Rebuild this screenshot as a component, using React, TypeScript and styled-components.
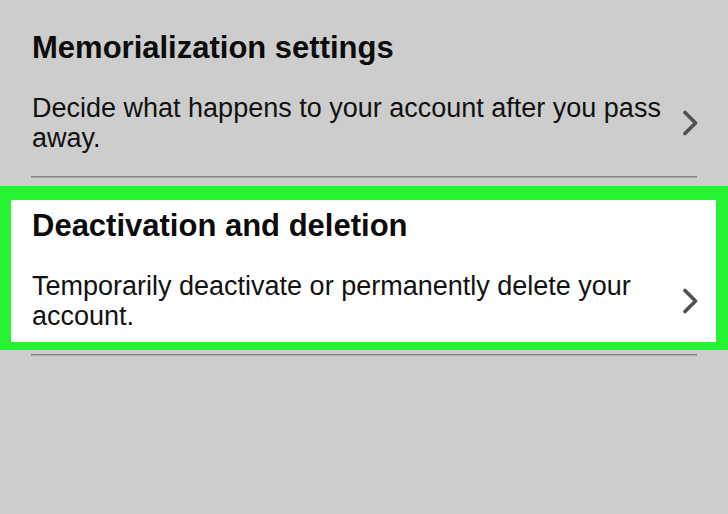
import React from "react";
import styled, { createGlobalStyle, css } from "styled-components";

const GlobalStyle = createGlobalStyle`
  html, body {
    margin: 0;
    padding: 0;
    background: #cdcdcd;
  }
  body {
    font-family: "Liberation Sans", Arial, sans-serif;
    color: #111;
  }
`;

const Page = styled.div`
  width: 728px;
  height: 514px;
  padding-top: 8px;
  box-sizing: border-box;
  background: #cdcdcd;
  overflow: hidden;
`;

interface ItemProps {
  readonly highlighted?: boolean;
}

const Item = styled.div<ItemProps>`
  box-sizing: border-box;
  width: 728px;
  padding: 8px 21px 11px 21px;
  border-style: solid;
  border-width: 14px 12px 8px 11px;
  border-color: transparent;
  ${({ highlighted }) =>
    highlighted &&
    css`
      background: #ffffff;
      border-color: #25f231;
    `}
`;

const Title = styled.div`
  font-size: 31px;
  line-height: 36px;
  font-weight: 700;
  color: #0c0c0c;
`;

const Body = styled.div`
  display: flex;
  align-items: center;
  margin-top: 27px;
`;

const Description = styled.div`
  flex: 1;
  font-size: 27px;
  line-height: 30px;
  color: #111;
`;

const Chevron = styled.svg`
  flex: none;
  width: 16px;
  height: 26px;
  margin-left: 12px;
  margin-right: -3px;
`;

const Divider = styled.div`
  height: 0;
  margin: 4px 31px 8px 31px;
  border-top: 1px solid #858585;
  border-bottom: 1px solid #acacac;
`;

const Arrow = () => (
  <Chevron viewBox="0 0 16 26">
    <polyline
      points="3,2.5 13.5,13 3,23.5"
      fill="none"
      stroke="#505050"
      strokeWidth="3.6"
      strokeLinecap="round"
      strokeLinejoin="round"
    />
  </Chevron>
);

const items = [
  {
    title: "Memorialization settings",
    text: "Decide what happens to your account after you pass away.",
  },
  {
    title: "Deactivation and deletion",
    text: "Temporarily deactivate or permanently delete your account.",
    highlighted: true,
  },
];

const App = () => {
  return (
    <Page>
      <GlobalStyle />
      {items.map((item) => (
        <React.Fragment key={item.title}>
          <Item highlighted={item.highlighted}>
            <Title>{item.title}</Title>
            <Body>
              <Description>{item.text}</Description>
              <Arrow />
            </Body>
          </Item>
          <Divider />
        </React.Fragment>
      ))}
    </Page>
  );
};

export default App;
